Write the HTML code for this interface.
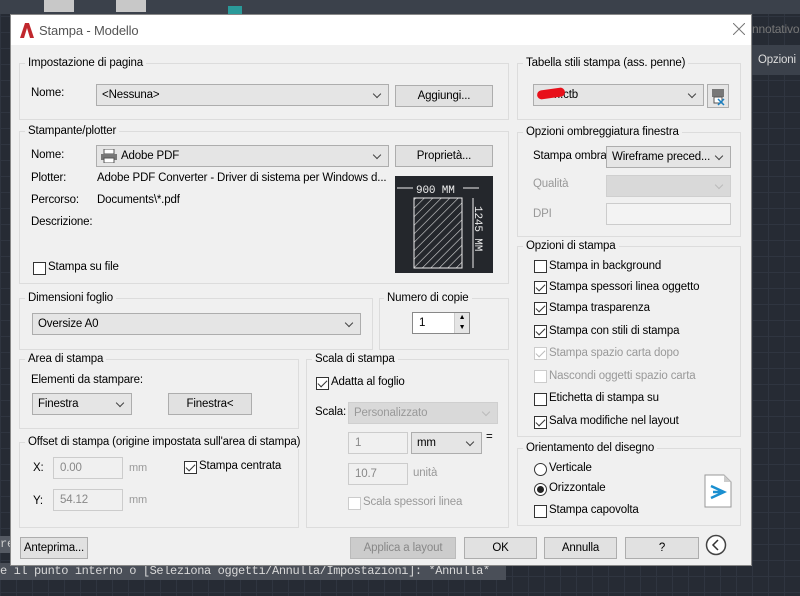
<!DOCTYPE html>
<html><head><meta charset="utf-8"><style>
*{box-sizing:border-box;margin:0;padding:0}
body{width:800px;height:596px;overflow:hidden;position:relative;background:#262b34;font-family:"Liberation Sans",sans-serif;font-size:11.5px;letter-spacing:-0.15px;color:#000;
background-image:linear-gradient(#2f3540 1px,transparent 1px),linear-gradient(90deg,#2f3540 1px,transparent 1px);background-size:16px 16px}
.a{position:absolute;white-space:nowrap}
.dlg{position:absolute;left:10px;top:14px;width:742px;height:552px;background:#f0f0f0;border:1px solid #888}
.tb{position:absolute;left:0;top:0;width:740px;height:30px;background:#fff}
.box{position:absolute;border:1px solid #dcdcdc}
.lg{position:absolute;background:#f0f0f0;padding:0 3px;line-height:14px}
.sel{position:absolute;background:#e5e5e5;border:1px solid #adadad;height:22px;line-height:20px;padding-left:5px}
.sel:after{content:"";position:absolute;right:8px;top:6px;width:5px;height:5px;border-right:1px solid #444;border-bottom:1px solid #444;transform:rotate(45deg)}
.dis{background:#d9d9d9;border-color:#cfcfcf;color:#999}
.dis:after{border-color:#bbb}
.btn{position:absolute;background:#e1e1e1;border:1px solid #adadad;height:22px;line-height:20px;text-align:center}
.inp{position:absolute;background:#f0f0f0;border:1px solid #ccc;height:22px;line-height:20px;padding-left:6px;color:#888}
.cb{position:absolute;width:13px;height:13px;border:1px solid #333;background:#fff}
.cb.on:after{content:"";position:absolute;left:3px;top:0px;width:4px;height:8px;border-right:1.5px solid #333;border-bottom:1.5px solid #333;transform:rotate(45deg)}
.cb.d{border-color:#ccc}.cb.d:after{border-color:#bbb}
.g{color:#999}
</style></head><body>
<div class="a" style="left:0;top:0;width:800px;height:14px;background:#3b414b"></div>
<div class="a" style="left:44px;top:0;width:30px;height:12px;background:#c8c8c8"></div>
<div class="a" style="left:116px;top:0;width:30px;height:12px;background:#c8c8c8"></div>
<div class="a" style="left:228px;top:6px;width:14px;height:8px;background:#2a9a9a"></div>
<div class="a" style="left:752px;top:45px;width:48px;height:30px;background:#3b414b;color:#ddd;line-height:30px;padding-left:6px">Opzioni</div>
<div class="a" style="left:752px;top:14px;width:48px;height:30px;color:#777;line-height:30px;font-size:12px">nnotativo</div>
<div class="a" style="left:0;top:536px;width:10px;height:17px;background:#555a63;color:#ccc;font:12px 'Liberation Mono',monospace;line-height:17px">re</div>
<div class="a" style="left:0;top:563px;width:506px;height:17px;background:#4a4f58;color:#d8d8d8;font:12px 'Liberation Mono',monospace;letter-spacing:-0.4px;line-height:17px">e il punto interno o [Seleziona oggetti/Annulla/Impostazioni]: *Annulla*</div>

<div class="dlg">
<div class="tb">
<svg class="a" style="left:9px;top:8px" width="14" height="15" viewBox="0 0 14 15"><path d="M0 15L5 0h4l5 15h-4L7 5 4 15z" fill="#c0272d"/></svg>
<div class="a" style="left:28px;top:8px;font-size:13px;color:#555">Stampa - Modello</div>
<svg class="a" style="left:722px;top:8px" width="12" height="12"><path d="M0 0L12 12M12 0L0 12" stroke="#777" stroke-width="1"/></svg>
</div>

<div class="box" style="left:8px;top:48px;width:490px;height:57px"></div>
<div class="lg" style="left:14px;top:41px">Impostazione di pagina</div>
<div class="a" style="left:20px;top:72px">Nome:</div>
<div class="sel" style="left:85px;top:69px;width:293px">&lt;Nessuna&gt;</div>
<div class="btn" style="left:384px;top:70px;width:98px">Aggiungi...</div>

<div class="box" style="left:506px;top:48px;width:224px;height:57px"></div>
<div class="lg" style="left:512px;top:41px">Tabella stili stampa (ass. penne)</div>
<div class="sel" style="left:522px;top:69px;width:171px;padding-left:20px">ri.ctb</div>
<div class="a" style="left:526px;top:74px;width:28px;height:9px;background:#e8101a;border-radius:5px;transform:rotate(-8deg)"></div>
<div class="a" style="left:696px;top:69px;width:22px;height:24px;background:#e5e5e5;border:1px solid #adadad"><svg width="20" height="22"><rect x="4" y="4" width="12" height="8" fill="#777"/><rect x="6" y="12" width="8" height="6" fill="#fff" stroke="#555"/><path d="M10 14l6 6M16 14l-6 6" stroke="#1a7fc0" stroke-width="1.5"/></svg></div>

<div class="box" style="left:8px;top:116px;width:490px;height:153px"></div>
<div class="lg" style="left:14px;top:109px">Stampante/plotter</div>
<div class="a" style="left:20px;top:134px">Nome:</div>
<div class="sel" style="left:85px;top:130px;width:293px;padding-left:24px">Adobe PDF</div>
<svg class="a" style="left:90px;top:134px" width="16" height="14"><rect x="3" y="0" width="10" height="5" fill="#fff" stroke="#555"/><rect x="0" y="5" width="16" height="6" fill="#777"/><rect x="3" y="9" width="10" height="5" fill="#fff" stroke="#555"/></svg>
<div class="btn" style="left:384px;top:130px;width:98px">Proprietà...</div>
<div class="a" style="left:20px;top:157px">Plotter:</div>
<div class="a" style="left:86px;top:157px;width:292px;overflow:hidden">Adobe PDF Converter - Driver di sistema per Windows d...</div>
<div class="a" style="left:20px;top:179px">Percorso:</div>
<div class="a" style="left:86px;top:179px">Documents\*.pdf</div>
<div class="a" style="left:20px;top:201px">Descrizione:</div>
<svg class="a" style="left:384px;top:161px" width="98" height="97"><rect width="98" height="97" fill="#24272c"/>
<defs><pattern id="h" width="6" height="6" patternUnits="userSpaceOnUse" patternTransform="rotate(45)"><line x1="0" y1="0" x2="0" y2="6" stroke="#ddd" stroke-width="1.2"/></pattern></defs>
<rect x="19" y="22" width="48" height="70" fill="url(#h)" stroke="#eee"/>
<text x="21" y="17" fill="#eee" font-size="11" font-family="Liberation Mono">900 MM</text>
<line x1="2" y1="12" x2="18" y2="12" stroke="#eee"/><line x1="68" y1="12" x2="84" y2="12" stroke="#eee"/>
<line x1="78" y1="22" x2="78" y2="92" stroke="#eee"/>
<text transform="translate(80,30) rotate(90)" fill="#eee" font-size="11" font-family="Liberation Mono">1245 MM</text></svg>
<div class="cb" style="left:22px;top:247px"></div><div class="a" style="left:37px;top:246px">Stampa su file</div>

<div class="box" style="left:506px;top:117px;width:224px;height:105px"></div>
<div class="lg" style="left:512px;top:110px">Opzioni ombreggiatura finestra</div>
<div class="a" style="left:522px;top:135px">Stampa ombra</div>
<div class="sel" style="left:595px;top:131px;width:125px">Wireframe preced...</div>
<div class="a g" style="left:522px;top:163px">Qualità</div>
<div class="sel dis" style="left:595px;top:160px;width:125px"></div>
<div class="a g" style="left:522px;top:193px">DPI</div>
<div class="inp" style="left:595px;top:188px;width:125px;background:#f3f3f3"></div>

<div class="box" style="left:8px;top:283px;width:354px;height:52px"></div>
<div class="lg" style="left:14px;top:276px">Dimensioni foglio</div>
<div class="sel" style="left:21px;top:298px;width:329px">Oversize A0</div>
<div class="box" style="left:368px;top:283px;width:130px;height:52px"></div>
<div class="lg" style="left:373px;top:276px">Numero di copie</div>
<div class="a" style="left:401px;top:297px;width:58px;height:22px;background:#fff;border:1px solid #888;padding-left:6px;line-height:20px">1</div>
<div class="a" style="left:443px;top:298px;width:15px;height:20px;background:#e5e5e5;border-left:1px solid #ccc;font-size:7px;text-align:center;line-height:10px">▲<br>▼</div>

<div class="box" style="left:8px;top:344px;width:280px;height:70px"></div>
<div class="lg" style="left:14px;top:337px">Area di stampa</div>
<div class="a" style="left:20px;top:359px">Elementi da stampare:</div>
<div class="sel" style="left:21px;top:378px;width:100px">Finestra</div>
<div class="btn" style="left:157px;top:378px;width:84px">Finestra&lt;</div>

<div class="box" style="left:8px;top:427px;width:280px;height:86px"></div>
<div class="lg" style="left:14px;top:420px">Offset di stampa (origine impostata sull'area di stampa)</div>
<div class="a" style="left:22px;top:447px">X:</div>
<div class="inp" style="left:42px;top:442px;width:70px">0.00</div>
<div class="a g" style="left:118px;top:447px;font-size:11px">mm</div>
<div class="cb on" style="left:173px;top:446px"></div><div class="a" style="left:188px;top:445px">Stampa centrata</div>
<div class="a" style="left:22px;top:480px">Y:</div>
<div class="inp" style="left:42px;top:474px;width:70px">54.12</div>
<div class="a g" style="left:118px;top:479px;font-size:11px">mm</div>

<div class="box" style="left:295px;top:344px;width:203px;height:169px"></div>
<div class="lg" style="left:301px;top:337px">Scala di stampa</div>
<div class="cb on" style="left:305px;top:362px"></div><div class="a" style="left:320px;top:361px">Adatta al foglio</div>
<div class="a" style="left:304px;top:391px">Scala:</div>
<div class="sel dis" style="left:337px;top:387px;width:150px">Personalizzato</div>
<div class="inp" style="left:337px;top:417px;width:60px">1</div>
<div class="sel" style="left:400px;top:417px;width:71px">mm</div>
<div class="a" style="left:475px;top:416px">=</div>
<div class="inp" style="left:337px;top:448px;width:60px">10.7</div>
<div class="a g" style="left:402px;top:452px">unità</div>
<div class="cb d" style="left:337px;top:482px"></div><div class="a g" style="left:352px;top:481px">Scala spessori linea</div>

<div class="box" style="left:506px;top:231px;width:224px;height:191px"></div>
<div class="lg" style="left:512px;top:224px">Opzioni di stampa</div>
<div class="cb" style="left:523px;top:245px"></div><div class="a" style="left:538px;top:245px">Stampa in background</div>
<div class="cb on" style="left:523px;top:266px"></div><div class="a" style="left:538px;top:266px">Stampa spessori linea oggetto</div>
<div class="cb on" style="left:523px;top:287px"></div><div class="a" style="left:538px;top:287px">Stampa trasparenza</div>
<div class="cb on" style="left:523px;top:310px"></div><div class="a" style="left:538px;top:310px">Stampa con stili di stampa</div>
<div class="cb on d" style="left:523px;top:332px"></div><div class="a g" style="left:538px;top:332px">Stampa spazio carta dopo</div>
<div class="cb d" style="left:523px;top:355px"></div><div class="a g" style="left:538px;top:355px">Nascondi oggetti spazio carta</div>
<div class="cb" style="left:523px;top:378px"></div><div class="a" style="left:538px;top:377px">Etichetta di stampa su</div>
<div class="cb on" style="left:523px;top:401px"></div><div class="a" style="left:538px;top:400px">Salva modifiche nel layout</div>

<div class="box" style="left:506px;top:433px;width:224px;height:78px"></div>
<div class="lg" style="left:512px;top:426px">Orientamento del disegno</div>
<div class="a" style="left:523px;top:448px;width:13px;height:13px;border:1px solid #333;border-radius:50%;background:#fff"></div><div class="a" style="left:538px;top:447px">Verticale</div>
<div class="a" style="left:523px;top:468px;width:13px;height:13px;border:1px solid #333;border-radius:50%;background:#fff"><div style="margin:2px;width:7px;height:7px;border-radius:50%;background:#222"></div></div><div class="a" style="left:538px;top:467px">Orizzontale</div>
<div class="cb" style="left:523px;top:490px"></div><div class="a" style="left:538px;top:489px">Stampa capovolta</div>
<svg class="a" style="left:693px;top:459px" width="28" height="34"><path d="M1 1h19l7 7v25H1z" fill="#fff" stroke="#999"/><path d="M20 1v7h7z" fill="#ccc"/><path d="M7 12l13 6-13 6M9 18h8" stroke="#1a8fd0" stroke-width="2.5" fill="none"/></svg>

<div class="btn" style="left:9px;top:522px;width:68px">Anteprima...</div>
<div class="btn" style="left:339px;top:522px;width:106px;background:#ccc;border-color:#bbb;color:#888">Applica a layout</div>
<div class="btn" style="left:453px;top:522px;width:73px">OK</div>
<div class="btn" style="left:533px;top:522px;width:73px">Annulla</div>
<div class="btn" style="left:614px;top:522px;width:74px">?</div>
<svg class="a" style="left:694px;top:519px" width="22" height="22"><circle cx="11" cy="11" r="9.5" fill="#fff" stroke="#444" stroke-width="1.5"/><path d="M13 6l-5 5 5 5" stroke="#333" stroke-width="1.5" fill="none"/></svg>
</div>
</body></html>
